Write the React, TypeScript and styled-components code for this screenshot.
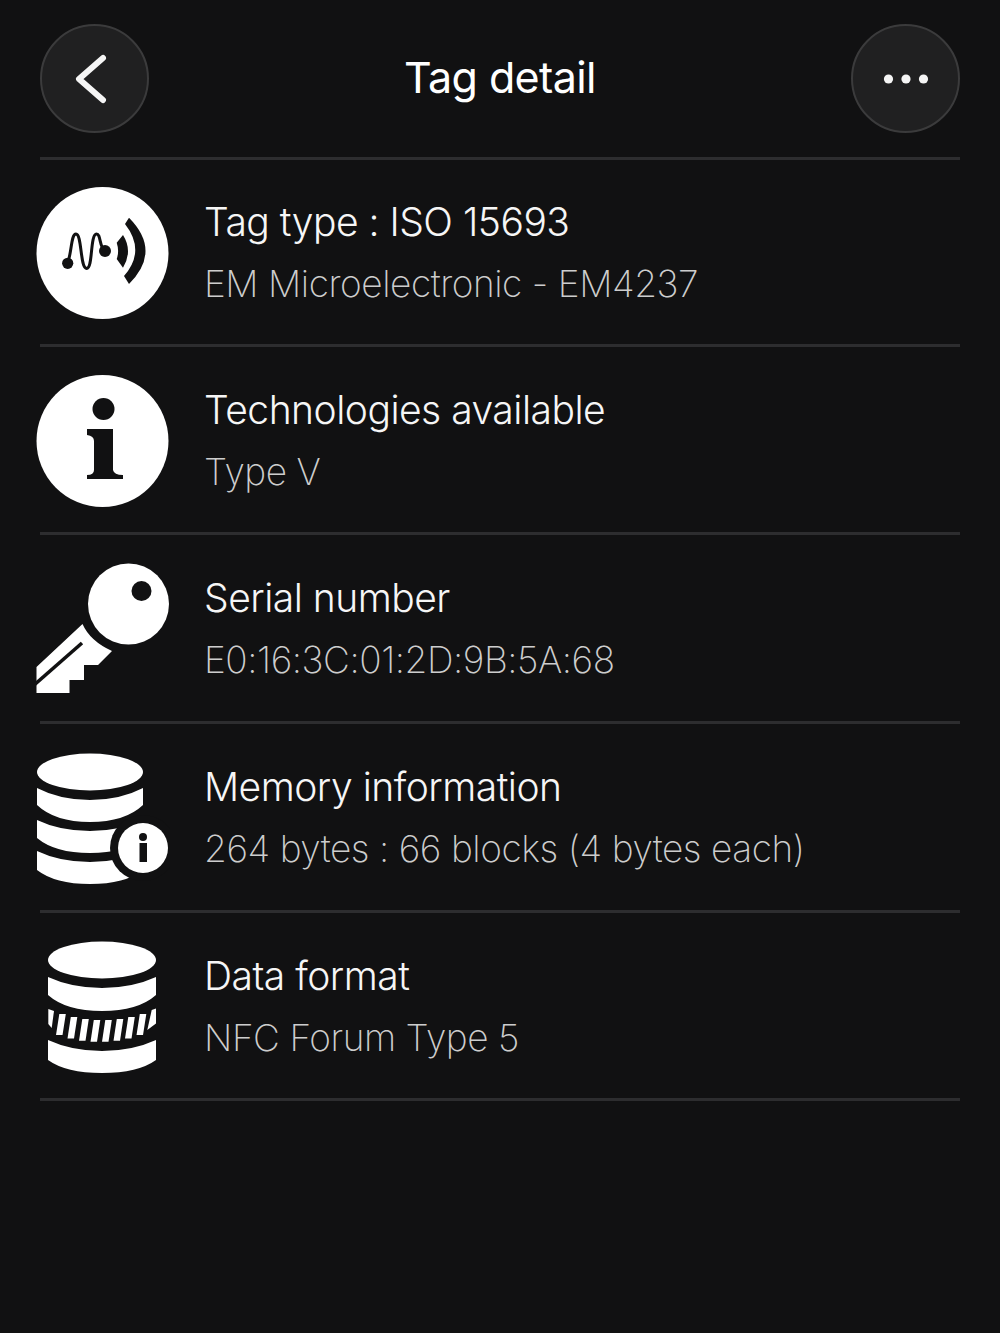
import styled, { createGlobalStyle } from "styled-components";

const GlobalStyle = createGlobalStyle`
  html, body {
    margin : 0;
    background : #111112;
  }
`;

const Page = styled.div`
  box-sizing : border-box;
  width : 1000px;
  min-height : 1333px;
  padding : 24px 40px 0;
  background : #111112;
  font-family : Inter, "Liberation Sans", sans-serif;
`;

const Header = styled.header`
  display : flex;
  align-items : flex-start;
  justify-content : space-between;
  box-sizing : border-box;
  height : 135.5px;
  border-bottom : 3px solid #2d2d2f;
`;

const RoundButton = styled.button`
  display : flex;
  align-items : center;
  justify-content : center;
  box-sizing : border-box;
  width : 109px;
  height : 109px;
  padding : 0;
  border : 2px solid #3b3b3c;
  border-radius : 50%;
  background : #202021;
`;

const Title = styled.h1`
  margin : 0;
  font-size : 43px;
  line-height : 106px;
  font-weight : 400;
  letter-spacing : -0.6px;
  color : #fff;
`;

const Row = styled.div`
  display : flex;
  align-items : center;
  box-sizing : border-box;
  height : 188.7px;
  padding-top : 2px;
  border-bottom : 3px solid #2d2d2f;
  &:first-of-type {
    height : 187.2px;
  }
`;

const IconBox = styled.svg`
  flex : none;
  width : 136px;
  height : 136px;
  margin-left : -6px;
  margin-right : 35px;
`;

const Texts = styled.div`
  display : flex;
  flex-direction : column;
  gap : 14px;
  margin-left : -1px;
`;

const Name = styled.div`
  font-size : 39px;
  line-height : 48px;
  font-weight : 280;
  letter-spacing : -0.5px;
  color : #f6f6f6;
`;

const Value = styled.div`
  font-size : 37px;
  line-height : 48px;
  font-weight : 200;
  letter-spacing : -0.45px;
  color : #cdcdcd;
`;

const BG = "#111112";

function TagIcon() {
  return (
    <IconBox viewBox="34 184 136 136">
      <circle cx="102.5" cy="252" r="66" fill="#fff" />
      <circle cx="67.7" cy="262.3" r="5.6" fill={BG} />
      <circle cx="105" cy="250" r="6" fill={BG} />
      <path
        d="M67.7 262 C72 250 71 233 76 233 C82 233 80 267.5 86.7 267.5 C93 267.5 90 233 96.5 233 C101 233 99 246 105 250"
        fill="none"
        stroke={BG}
        strokeWidth="3"
      />
      <path d="M116.7 241.7 L123 234 Q133 250 123 266.7 L116.7 258 Q119.5 250 116.7 241.7 Z" fill={BG} />
      <path d="M125 223 L129 216.7 Q162 250 129 283 L124 275 Q146 250 125 223 Z" fill={BG} />
    </IconBox>
  );
}

function InfoIcon() {
  return (
    <IconBox viewBox="34 373 136 136">
      <circle cx="102.5" cy="441" r="66" fill="#fff" />
      <circle cx="103.5" cy="409" r="11" fill={BG} />
      <path
        d="M87 429 H113 V470 Q114 475 123 475 V479 H87 V475 Q94 475 94 470 V441 Q94 436 87 435 Z"
        fill={BG}
      />
    </IconBox>
  );
}

function KeyIcon() {
  return (
    <IconBox viewBox="34 562 136 136">
      <circle cx="128.5" cy="605" r="40.5" fill="#fff" />
      <circle cx="141.5" cy="592" r="10" fill={BG} />
      <path
        d="M82.5 625 Q90 642 112 652 L98 666 H84 V681 H69.5 V694 H36.5 V668 Z"
        fill="#fff"
      />
      <path d="M82 644 L33 687" stroke={BG} strokeWidth="3.6" fill="none" />
    </IconBox>
  );
}

function DatabaseInfoIcon() {
  return (
    <IconBox viewBox="34 750 136 136">
      <ellipse cx="90" cy="772" rx="53" ry="18.5" fill="#fff" />
      <path d="M37 788 Q60 800 90 800 Q120 800 143 788 V805 Q125 822 90 822 Q55 822 37 805 Z" fill="#fff" />
      <path d="M37 820 Q60 831 90 831 Q120 831 143 820 V838 Q125 853 90 853 Q55 853 37 838 Z" fill="#fff" />
      <path d="M37 851 Q60 862 90 862 Q120 862 143 851 V870 Q125 884 90 884 Q55 884 37 870 Z" fill="#fff" />
      <circle cx="143" cy="848" r="33" fill={BG} />
      <circle cx="143" cy="848" r="25" fill="#fff" />
      <circle cx="143" cy="837" r="4" fill={BG} />
      <rect x="139.5" y="843" width="7.5" height="19" fill={BG} />
    </IconBox>
  );
}

const stripes = [0, 1, 2, 3, 4, 5, 6, 7];

function CoinsIcon() {
  return (
    <IconBox viewBox="34 939 136 136">
      <ellipse cx="102" cy="960" rx="54" ry="18.5" fill="#fff" />
      <path d="M48 977 Q72 988 102 988 Q132 988 156 977 V995 Q138 1011 102 1011 Q66 1011 48 995 Z" fill="#fff" />
      <path d="M48 1040 Q72 1051 102 1051 Q132 1051 156 1040 V1060 Q138 1073 102 1073 Q66 1073 48 1060 Z" fill="#fff" />
      <path d="M48.3 1009 L54 1011 L51.7 1028 L48.3 1024 Z" fill="#fff" />
      <path d="M151.7 1010 L156 1008.5 V1023.5 L147.3 1030 Z" fill="#fff" />
      {stripes.map(i => {
        const x = 59.3 + i * 11.5;
        const d = (i - 3.5) / 3.5;
        const top = 1020 - 6 * d * d;
        const bottom = 1042 - 7 * d * d;
        return (
          <path
            key={i}
            d={`M${x} ${top} h6.5 L${x + 3.2} ${bottom} h-6.5 Z`}
            fill="#fff"
          />
        );
      })}
    </IconBox>
  );
}

const items = [
  { icon: <TagIcon />, name: "Tag type : ISO 15693", value: "EM Microelectronic - EM4237" },
  { icon: <InfoIcon />, name: "Technologies available", value: "Type V" },
  { icon: <KeyIcon />, name: "Serial number", value: "E0:16:3C:01:2D:9B:5A:68" },
  { icon: <DatabaseInfoIcon />, name: "Memory information", value: "264 bytes : 66 blocks (4 bytes each)" },
  { icon: <CoinsIcon />, name: "Data format", value: "NFC Forum Type 5" },
];

function App() {
  return (
    <Page>
      <GlobalStyle />
      <Header>
        <RoundButton>
          <svg width="60" height="60" viewBox="0 0 60 60">
            <path
              d="M38 9 L14 30 L38 51"
              fill="none"
              stroke="#f5f5f5"
              strokeWidth="6"
              strokeLinecap="round"
              strokeLinejoin="round"
            />
          </svg>
        </RoundButton>
        <Title>Tag detail</Title>
        <RoundButton>
          <svg width="50" height="14" viewBox="0 0 50 14">
            <circle cx="7.5" cy="7" r="4.6" fill="#f5f5f5" />
            <circle cx="25" cy="7" r="4.6" fill="#f5f5f5" />
            <circle cx="42.5" cy="7" r="4.6" fill="#f5f5f5" />
          </svg>
        </RoundButton>
      </Header>
      {items.map(item => (
        <Row key={item.name}>
          {item.icon}
          <Texts>
            <Name>{item.name}</Name>
            <Value>{item.value}</Value>
          </Texts>
        </Row>
      ))}
    </Page>
  );
}

export default App;
